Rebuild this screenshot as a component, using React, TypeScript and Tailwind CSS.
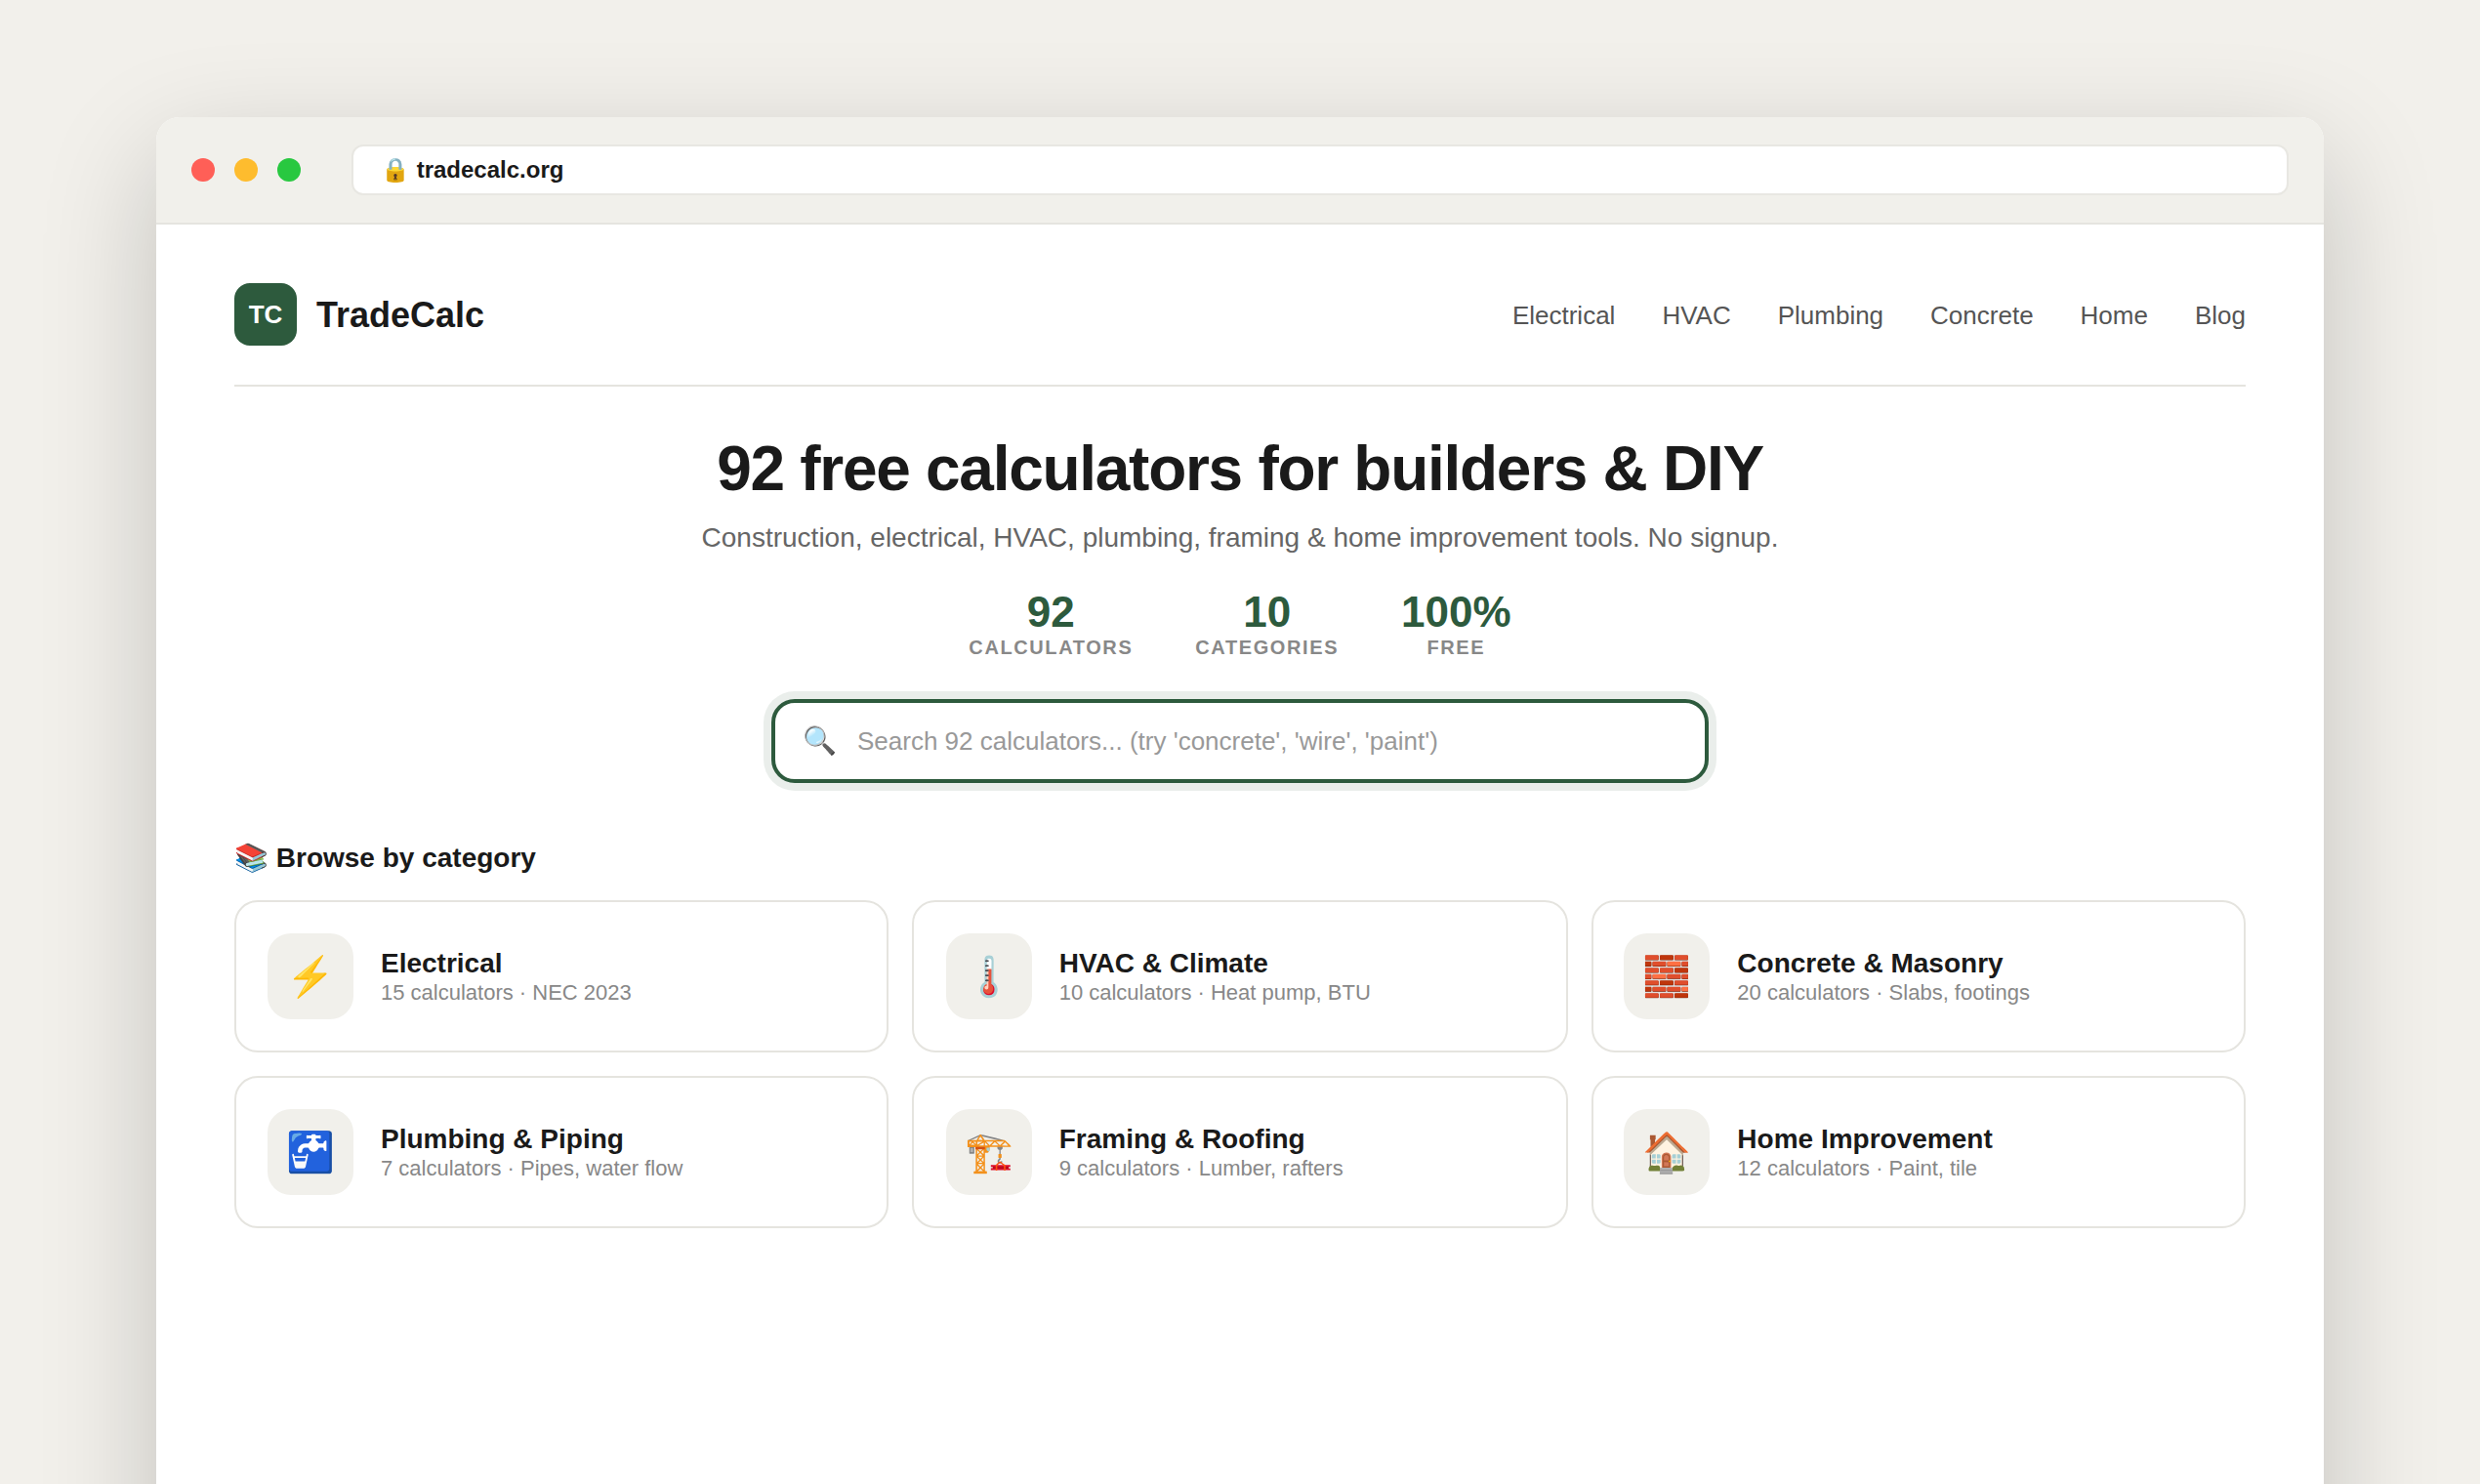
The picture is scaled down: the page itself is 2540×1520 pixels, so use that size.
const font = "font-['Liberation_Sans',Arial,sans-serif]";

const nav = ["Electrical", "HVAC", "Plumbing", "Concrete", "Home", "Blog"];
const stats = [
  ["92", "Calculators"],
  ["10", "Categories"],
  ["100%", "Free"],
];
const cats = [
  ["⚡", "Electrical", "15 calculators · NEC 2023", "pl-[32px]"],
  ["🌡️", "HVAC & Climate", "10 calculators · Heat pump, BTU", "pl-[32.67px]"],
  ["🧱", "Concrete & Masonry", "20 calculators · Slabs, footings", "pl-[31.33px]"],
  ["🚰", "Plumbing & Piping", "7 calculators · Pipes, water flow", "pl-[32px]"],
  ["🏗️", "Framing & Roofing", "9 calculators · Lumber, rafters", "pl-[32.67px]"],
  ["🏠", "Home Improvement", "12 calculators · Paint, tile", "pl-[31.33px]"],
];

export default function App() {
  return (
    <div className={`${font} h-[1520px] overflow-hidden bg-[#f2f0eb] px-[160px] pt-[120px] text-[#1a1a1a]`}>
      <div className="h-[1500px] overflow-hidden rounded-t-[24px] bg-white shadow-[0_40px_120px_rgba(0,0,0,0.2)]">
        <div className="flex items-center gap-[36px] border-b-2 border-[#e5e4df] bg-[#f1f0eb] px-[36px] py-[28px]">
          <div className="flex gap-[20px]">
            <span className="h-[24px] w-[24px] rounded-full bg-[#ff5f57]" />
            <span className="h-[24px] w-[24px] rounded-full bg-[#febc2e]" />
            <span className="h-[24px] w-[24px] rounded-full bg-[#28c840]" />
          </div>
          <div className="ml-[16px] flex h-[52px] flex-1 items-center rounded-[12px] border-2 border-[#e8e7e2] bg-white px-[28px] text-[24px] font-bold leading-none">
            <span>🔒 tradecalc.org</span>
          </div>
        </div>
        <div className="px-[80px] pt-[60px]">
          <div className="flex items-center justify-between border-b-2 border-[#e5e4df] pb-[40px]">
            <div className="flex items-center gap-[20px]">
              <div className="flex h-[64px] w-[64px] items-center justify-center rounded-[16px] bg-[#2d5a3d] text-[26px] font-bold text-white">TC</div>
              <div className="pt-[2px] text-[36px] font-bold">TradeCalc</div>
            </div>
            <div className="flex gap-[48px] pt-[2px] text-[26px] text-[#555555]">
              {nav.map((n) => (
                <span key={n}>{n}</span>
              ))}
            </div>
          </div>
          <div className="flex flex-col items-center pt-[46px]">
            <h1 className="text-[64px] font-bold leading-[1.2] tracking-[-1.28px]">92 free calculators for builders &amp; DIY</h1>
            <p className="mt-[15px] text-[28px] leading-[1.2] text-[#666666]">Construction, electrical, HVAC, plumbing, framing &amp; home improvement tools. No signup.</p>
            <div className="mt-[38px] flex gap-[64px]">
              {stats.map(([v, l]) => (
                <div key={l} className="flex flex-col items-center">
                  <div className="text-[44px] font-bold leading-none text-[#2d5a3d]">{v}</div>
                  <div className="mt-[4px] text-[20px] font-bold uppercase leading-none tracking-[1.6px] text-[#888888]">{l}</div>
                </div>
              ))}
            </div>
            <div className="mt-[43px] flex h-[86px] w-[960px] items-center gap-[21px] rounded-[24px] border-4 border-[#2d5a3d] bg-white px-[28px] shadow-[0_0_0_8px_rgba(45,90,61,0.1)]">
              <span className="text-[28px] leading-none">🔍</span>
              <input readOnly placeholder="Search 92 calculators... (try 'concrete', 'wire', 'paint')" className="flex-1 bg-transparent text-[26px] outline-none placeholder:text-[#999999]" />
            </div>
          </div>
          <h2 className="mt-[60px] text-[28px] font-bold leading-[1.2]">📚 Browse by category</h2>
          <div className="mt-[26px] grid grid-cols-[670px_672px_670px] gap-[24px]">
            {cats.map(([e, t, s, p]) => (
              <div key={t} className={`flex h-[156px] items-center gap-[28px] rounded-[24px] border-2 border-[#e5e4df] bg-white ${p}`}>
                <div className="flex h-[88px] w-[88px] items-center justify-center rounded-[24px] bg-[#f1f0eb] text-[40px] leading-none">{e}</div>
                <div>
                  <div className="text-[28px] font-bold leading-[1.2]">{t}</div>
                  <div className="text-[22px] leading-[1.2] text-[#888888]">{s}</div>
                </div>
              </div>
            ))}
          </div>
        </div>
      </div>
    </div>
  );
}
